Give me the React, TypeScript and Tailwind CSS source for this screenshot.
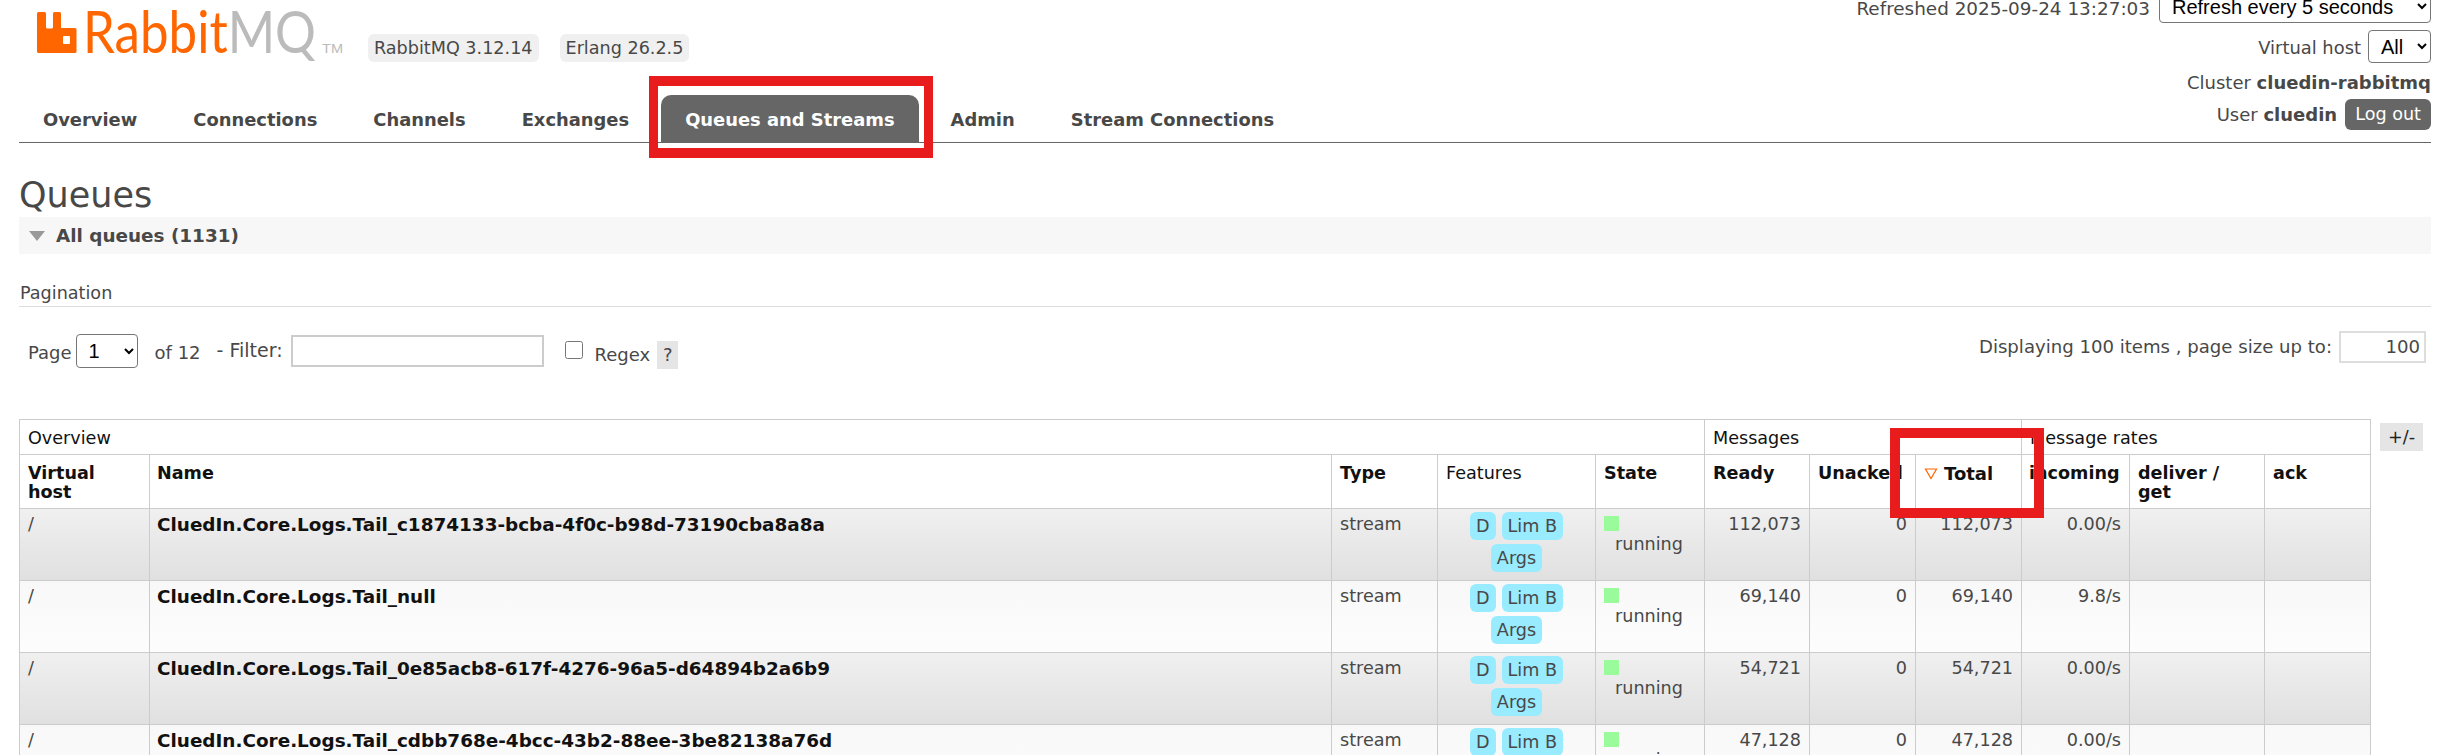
const tabs = ["Overview", "Connections", "Channels", "Exchanges", "Queues and Streams", "Admin", "Stream Connections"];

const columnWidths = ["w-[130px]", "w-[1182px]", "w-[106px]", "w-[158px]", "w-[109px]", "w-[105px]", "w-[106px]", "w-[106px]", "w-[108px]", "w-[135px]", "w-[106px]"];

const queues = [
  { name: "CluedIn.Core.Logs.Tail_c1874133-bcba-4f0c-b98d-73190cba8a8a", ready: "112,073", rate: "0.00/s", alt: true },
  { name: "CluedIn.Core.Logs.Tail_null", ready: "69,140", rate: "9.8/s", alt: false },
  { name: "CluedIn.Core.Logs.Tail_0e85acb8-617f-4276-96a5-d64894b2a6b9", ready: "54,721", rate: "0.00/s", alt: true },
  { name: "CluedIn.Core.Logs.Tail_cdbb768e-4bcc-43b2-88ee-3be82138a76d", ready: "47,128", rate: "0.00/s", alt: false },
];

function Logo() {
  return (
    <svg width="312" height="44" viewBox="0 0 312 44" className="shrink-0 overflow-visible">
      <path
        d="M1.5 0h6A1.5 1.5 0 0 1 9 1.5V15a1.5 1.5 0 0 0 1.500 1.500h4A1.500 1.500 0 0 0 16 15V1.500A1.500 1.500 0 0 1 17.500 0h5A1.500 1.500 0 0 1 24 1.500V16h14a1.500 1.500 0 0 1 1.500 1.500V39.500A1.500 1.500 0 0 1 38 41H1.500A1.500 1.500 0 0 1 0 39.500V1.500A1.500 1.500 0 0 1 1.500 0zM26 25v6a1 1 0 0 0 1 1h5a1 1 0 0 0 1-1v-6a1 1 0 0 0-1-1h-5a1 1 0 0 0-1 1z"
        fill="#ff6600"
        fillRule="evenodd"
      />
      <text x="46" y="41" fontSize="58" fontWeight="400" fontFamily="Lato, 'Liberation Sans', sans-serif" textLength="233" lengthAdjust="spacingAndGlyphs">
        <tspan fill="#ff6600">Rabbit</tspan>
        <tspan fill="#bbbbbb">MQ</tspan>
      </text>
      <text x="285" y="41" fontSize="13" fontFamily="'Liberation Sans', sans-serif" fill="#bbbbbb" textLength="21" lengthAdjust="spacingAndGlyphs">TM</text>
    </svg>
  );
}

function Badge({ children }: { children: React.ReactNode }) {
  return <span className="h-[28px] rounded-[6px] bg-[#f0f0f0] px-[6px] leading-[28px]">{children}</span>;
}

function Feature({ children }: { children: React.ReactNode }) {
  return <span className="h-[28px] rounded-[6px] bg-[#99ebff] px-[6px] leading-[28px]">{children}</span>;
}

function QueueRow({ name, ready, rate, alt }: { name: string; ready: string; rate: string; alt: boolean }) {
  const cell = "border border-[#ccc] px-[8px] pt-[6px] align-top";
  return (
    <tr className={`h-[72px] ${alt ? "bg-gradient-to-b from-[#f0f0f0] to-[#e0e0e0]" : "bg-gradient-to-b from-[#f8f8f8] to-[#fdfdfd]"}`}>
      <td className={cell}>/</td>
      <td className={`${cell} whitespace-nowrap pl-[7px] text-[18.4px] font-bold text-[#111]`}>{name}</td>
      <td className={cell}>stream</td>
      <td className="border border-[#ccc] px-[8px] pt-[3px] align-top">
        <div className="flex flex-wrap justify-center gap-x-[6px] gap-y-[4px]">
          <Feature>D</Feature>
          <Feature>Lim B</Feature>
          <Feature>Args</Feature>
        </div>
      </td>
      <td className="border border-[#ccc] px-[8px] pt-[7px] align-top">
        <div className="h-[15px] w-[15px] bg-[#99fb99]" />
        <div className="mt-[4px] pl-[11px]">running</div>
      </td>
      <td className={`${cell} text-right`}>{ready}</td>
      <td className={`${cell} text-right`}>0</td>
      <td className={`${cell} text-right`}>{ready}</td>
      <td className={`${cell} text-right`}>{rate}</td>
      <td className={cell} />
      <td className={cell} />
    </tr>
  );
}

export default function App() {
  const head = "border border-[#ccc] px-[8px] pt-[9px] align-top text-left font-bold";
  const group = "border border-[#ccc] px-[8px] pt-[2px] text-left font-normal";

  return (
    <div className="relative h-[755px] w-[2442px] overflow-hidden bg-white pl-[19px] pr-[11px] font-['DejaVu_Sans',sans-serif] text-[17.6px] leading-[19px] text-[#484848]">
      {/* Header */}
      <header className="flex h-[143px] justify-between border-b border-[#666]">
        <div className="flex flex-col justify-between">
          <div className="flex pl-[18px] pt-[12px]">
            <Logo />
            <div className="ml-[19px] mt-[22px] flex gap-[21px]">
              <Badge>RabbitMQ 3.12.14</Badge>
              <Badge>Erlang 26.2.5</Badge>
            </div>
          </div>
          <nav className="flex gap-[8px] text-[17.9px]">
            {tabs.map((tab) => (
              <a
                key={tab}
                className={`flex h-[47px] items-center rounded-t-[10px] px-[24px] pt-[2px] font-bold ${
                  tab === "Queues and Streams" ? "bg-[#666] text-white" : "text-[#484848]"
                }`}
              >
                {tab}
              </a>
            ))}
          </nav>
        </div>

        <div className="-mt-[10px] flex flex-col items-end">
          <div className="flex items-center gap-[9px]">
            <span className="mt-[4px] text-[18.4px]">Refreshed 2025-09-24 13:27:03</span>
            <select className="h-[33px] w-[272px] rounded-[4px] border border-[#767676] pl-[8px] font-['Liberation_Sans',sans-serif] text-[20px] text-black">
              <option>Refresh every 5 seconds</option>
            </select>
          </div>
          <div className="mt-[7px] flex items-center gap-[7px]">
            <span className="mt-[2px] text-[17.9px]">Virtual host</span>
            <select className="h-[33px] w-[63px] rounded-[4px] border border-[#767676] pl-[8px] font-['Liberation_Sans',sans-serif] text-[20px] text-black">
              <option>All</option>
            </select>
          </div>
          <div className="mt-[10px] text-[18px]">
            Cluster <b>cluedin-rabbitmq</b>
          </div>
          <div className="mt-[7px] flex items-center gap-[8px] text-[18px]">
            <span>
              User <b>cluedin</b>
            </span>
            <span className="h-[31px] rounded-[6px] bg-[#666] px-[10px] text-[17.6px] leading-[31px] text-white">Log out</span>
          </div>
        </div>
      </header>

      {/* Queues */}
      <h1 className="mt-[31px] text-[35px] font-normal leading-[43px]">Queues</h1>
      <div className="flex h-[37px] items-center bg-[#f7f7f7] pl-[10px] text-[18.4px] font-bold">
        <span className="mr-[11px] h-0 w-0 border-x-[8.5px] border-t-[10px] border-x-transparent border-t-[#999]" />
        All queues (1131)
      </div>

      <div className="mt-[30px] h-[23px] border-b border-[#ddd] pl-[1px] leading-[18px]">Pagination</div>

      <div className="flex justify-between">
        <div className="mt-[27px] flex h-[34px] items-center pl-[9px] text-[18px]">
          <span className="mt-[2px]">Page</span>
          <select className="ml-[4px] h-[34px] w-[62px] rounded-[4px] border border-[#767676] pl-[8px] font-['Liberation_Sans',sans-serif] text-[20px] text-black">
            <option>1</option>
          </select>
          <span className="ml-[17px] mt-[2px]">of 12</span>
          <span className="ml-[16px] -mt-[2px] text-[19px]">- Filter:</span>
          <input className="ml-[8px] h-[32px] w-[253px] border-2 border-[#ccc]" />
          <input type="checkbox" className="ml-[21px] -mt-[2px] h-[18px] w-[18px]" />
          <span className="ml-[12px] mt-[7px]">Regex</span>
          <span className="ml-[7px] mt-[7px] h-[28px] w-[21px] bg-[#e5e5e5] text-center leading-[28px]">?</span>
        </div>
        <div className="mt-[23px] flex h-[33px] items-center text-[18.1px]">
          <span>Displaying 100 items , page size up to:</span>
          <input defaultValue="100" className="ml-[7px] h-[32px] w-[87px] border-2 border-[#ddd] pr-[4px] text-right" />
          <span className="w-[5px]" />
        </div>
      </div>

      {/* Table */}
      <div className="mt-[51px] flex items-start gap-[9px]">
        <table className="w-[2351px] table-fixed border-collapse text-[17.6px]">
          <colgroup>
            {columnWidths.map((width, i) => (
              <col key={i} className={width} />
            ))}
          </colgroup>
          <thead className="text-[#111]">
            <tr className="h-[35px]">
              <th colSpan={5} className={group}>Overview</th>
              <th colSpan={3} className={group}>Messages</th>
              <th colSpan={3} className={group}>Message rates</th>
            </tr>
            <tr className="h-[54px]">
              <th className={head}>Virtual host</th>
              <th className={`${head} pl-[7px]`}>Name</th>
              <th className={head}>Type</th>
              <th className={`${head} !font-normal`}>Features</th>
              <th className={head}>State</th>
              <th className={head}>Ready</th>
              <th className={`${head} whitespace-nowrap`}>Unacked</th>
              <th className={head}>
                <span className="flex items-center gap-[6px] text-[18px]">
                  <svg width="14" height="12" viewBox="0 0 14 12" className="shrink-0">
                    <path d="M1.500 1h11L7 10.500z" fill="none" stroke="#ff6600" strokeWidth="1.200" />
                  </svg>
                  Total
                </span>
              </th>
              <th className={`${head} pl-[7px]`}>incoming</th>
              <th className={head}>deliver / get</th>
              <th className={head}>ack</th>
            </tr>
          </thead>
          <tbody>
            {queues.map((queue) => (
              <QueueRow key={queue.name} {...queue} />
            ))}
          </tbody>
        </table>
        <button className="mt-[4px] h-[28px] w-[43px] bg-[#e5e5e5] leading-[28px] text-[#222]">+/-</button>
      </div>

      {/* Red annotation frames */}
      <div className="absolute left-[649px] top-[76px] h-[82px] w-[284px] border-x-[9px] border-y-[10px] border-[#e81c1c]" />
      <div className="absolute left-[1890px] top-[428px] h-[90px] w-[154px] border-[10px] border-[#e81c1c]" />
    </div>
  );
}
